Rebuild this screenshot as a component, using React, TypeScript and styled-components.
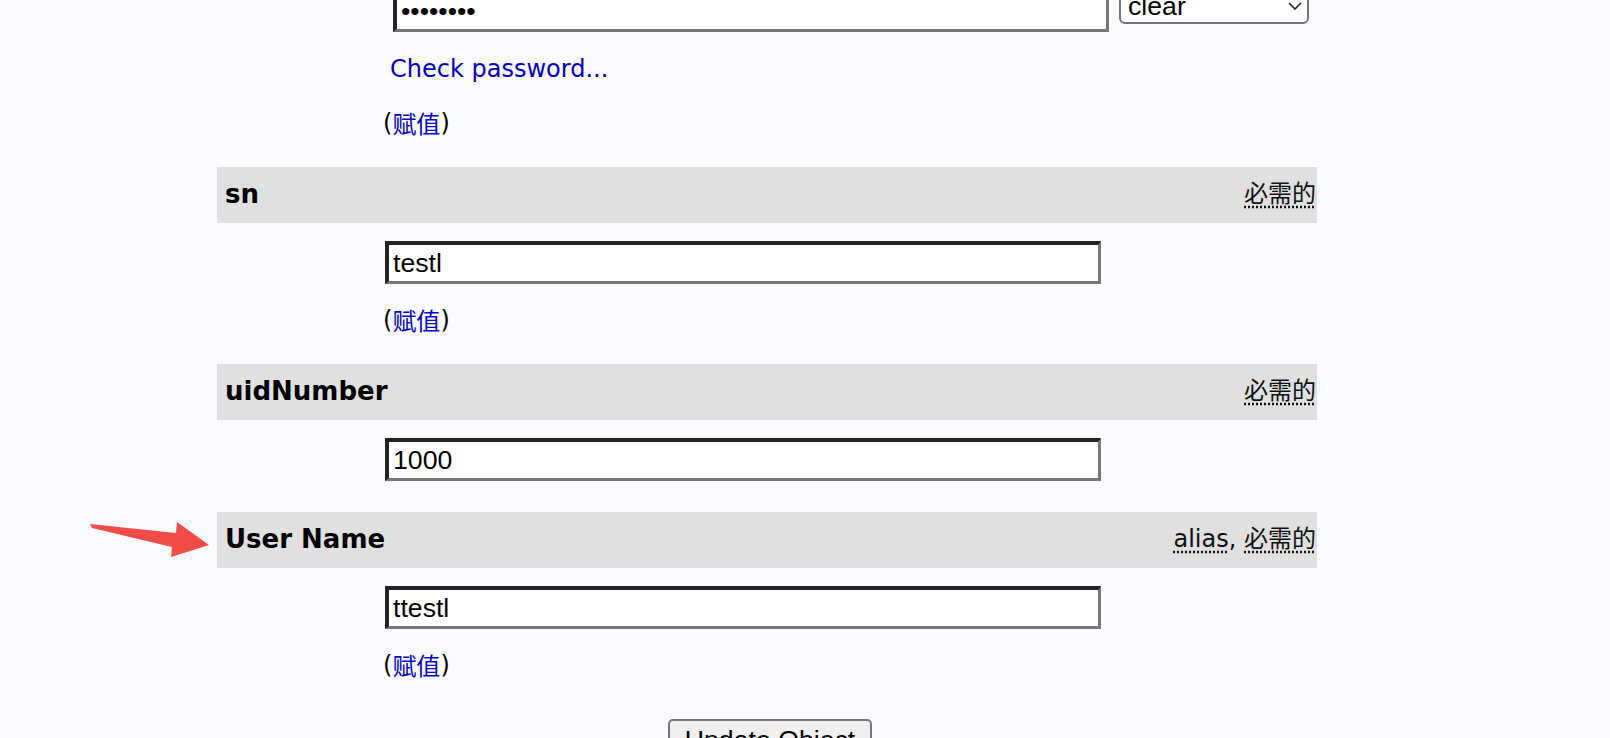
import styled, { createGlobalStyle } from 'styled-components';

const GlobalStyle = createGlobalStyle`
  html, body {
    margin: 0;
    padding: 0;
    background: #fbfbfd;
    overflow: hidden;
  }
  body {
    font-family: "DejaVu Sans", Verdana, "Noto Sans CJK SC", sans-serif;
    font-size: 24px;
    color: #000;
  }
`;

const Page = styled.div`
  position: relative;
  width: 1100px;
  margin: -11px 0 0 217px;
`;

const AttrHeader = styled.div`
  position: relative;
  box-sizing: border-box;
  display: flex;
  align-items: center;
  justify-content: space-between;
  height: 56px;
  padding: 0 1px 3px 8px;
  background: #e0e0e0;
`;

const AttrName = styled.span`
  font-weight: bold;
  font-size: 26px;
`;

const Hints = styled.span`
  margin-bottom: 4px;
  font-family: "DejaVu Sans", Verdana, "Noto Sans CJK SC", sans-serif;
  font-size: 24px;
  color: #111;
`;

const Abbr = styled.abbr`
  text-decoration: underline dotted;
  text-underline-offset: 4px;
  cursor: help;
`;

const AttrBody = styled.div<{ $top?: number; $bottom?: number }>`
  padding: ${(p) => p.$top ?? 18}px 0 ${(p) => p.$bottom ?? 30}px 168px;
`;

const Nested = styled.div`
  padding-left: 8px;
`;

const InputRow = styled.div`
  display: flex;
  align-items: flex-start;
  gap: 10px;
`;

const TextField = styled.input`
  display: block;
  box-sizing: border-box;
  width: 716px;
  height: 43px;
  margin: 0;
  padding: 1px 4px 0;
  border-width: 4px 3px 3px 4px;
  border-style: solid;
  border-color: #222 #777 #777 #222;
  background: #fff;
  font-family: "Liberation Sans", Arial, sans-serif;
  font-size: 26.67px;
  color: #000;
  outline: none;
`;

const SelectWrap = styled.div`
  position: relative;
  margin-top: -1px;
`;

const Select = styled.select`
  display: block;
  appearance: none;
  box-sizing: border-box;
  width: 190px;
  height: 36px;
  margin: 0;
  padding: 0 30px 0 7px;
  border: 2px solid #767676;
  border-radius: 6px;
  background: #fff;
  font-family: "Liberation Sans", Arial, sans-serif;
  font-size: 26.67px;
  color: #000;
`;

const Chevron = styled.svg`
  position: absolute;
  right: 7px;
  top: 14px;
  pointer-events: none;
`;

const CheckLink = styled.a`
  display: block;
  height: 28px;
  margin: 23px 0 0 -3px;
  line-height: 28px;
  color: #0000c4;
  text-decoration: none;
`;

const AssignLine = styled.div<{ $gap: number }>`
  display: flex;
  align-items: center;
  height: 28px;
  margin: ${(p) => p.$gap}px 0 0 -2px;
  font-size: 24px;
  line-height: 28px;
`;

const AssignLink = styled.a`
  color: #0000c4;
  text-decoration: none;
  font-family: "Noto Sans CJK SC", sans-serif;
  line-height: 28px;
`;

const Footer = styled.div`
  display: flex;
  justify-content: center;
  padding-left: 6px;
  margin-top: 10px;
`;

const SubmitButton = styled.button`
  box-sizing: border-box;
  height: 42px;
  padding: 0 15px;
  border: 2px solid #767676;
  border-radius: 5px;
  background: #efefef;
  font-family: "Liberation Sans", Arial, sans-serif;
  font-size: 26.67px;
  color: #000;
`;

const Pointer = styled.svg`
  position: absolute;
  left: -132px;
  top: 3px;
  pointer-events: none;
`;

function Assign({ gap }: { gap: number }) {
  return (
    <AssignLine $gap={gap}>
      (<AssignLink href="#">赋值</AssignLink>)
    </AssignLine>
  );
}

function Header({ name, alias, arrow }: { name: string; alias?: boolean; arrow?: boolean }) {
  return (
    <AttrHeader>
      {arrow && (
        <Pointer width="130" height="50" viewBox="0 0 130 50">
          <polygon points="5,9 91,18 92,7 124,30 86,42 87,32 7,13" fill="#f24b49" />
        </Pointer>
      )}
      <AttrName>{name}</AttrName>
      <Hints>
        {alias && (
          <>
            <Abbr title="alias">alias</Abbr>,{' '}
          </>
        )}
        <Abbr title="required">必需的</Abbr>
      </Hints>
    </AttrHeader>
  );
}

export default function App() {
  return (
    <>
      <GlobalStyle />
      <Page>
        <AttrBody $top={0}>
          <Nested>
            <InputRow>
              <TextField type="password" defaultValue="12345678" />
              <SelectWrap>
                <Select defaultValue="clear">
                  <option value="clear">clear</option>
                  <option value="md5">md5</option>
                  <option value="ssha">ssha</option>
                </Select>
                <Chevron width="14" height="8" viewBox="0 0 14 8">
                  <polyline points="1,1 7,7 13,1" fill="none" stroke="#222" strokeWidth="1.6" />
                </Chevron>
              </SelectWrap>
            </InputRow>
            <CheckLink href="#">Check password...</CheckLink>
          </Nested>
          <Assign gap={26} />
        </AttrBody>

        <Header name="sn" />
        <AttrBody>
          <TextField defaultValue="testl" />
          <Assign gap={22} />
        </AttrBody>

        <Header name="uidNumber" />
        <AttrBody $bottom={31}>
          <TextField defaultValue="1000" />
        </AttrBody>

        <Header name="User Name" alias arrow />
        <AttrBody>
          <TextField defaultValue="ttestl" />
          <Assign gap={22} />
        </AttrBody>

        <Footer>
          <SubmitButton>Update Object</SubmitButton>
        </Footer>
      </Page>
    </>
  );
}
